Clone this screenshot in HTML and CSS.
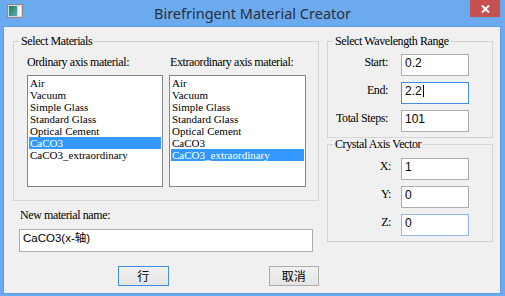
FILE: index.html
```html
<!DOCTYPE HTML>
<html>
<head>
  <meta http-equiv="content-type" content="text/html; charset=utf-8">
  <title>Birefringent Material Creator</title>
  <link rel="stylesheet" href="styles.css">
</head>
<body>
  <div class="window">
    <div class="titlebar">
      <svg class="app-icon" width="16" height="14" viewBox="0 0 16 14">
        <defs>
          <linearGradient id="pane" x1="0" y1="0" x2="1" y2="1">
            <stop offset="0" stop-color="#1f7a5c"/>
            <stop offset="0.5" stop-color="#3c9a7e"/>
            <stop offset="1" stop-color="#5aa8d0"/>
          </linearGradient>
        </defs>
        <rect x="0.5" y="0.5" width="15" height="13" fill="#d8d8d8" stroke="#8a8a8a"/>
        <rect x="2" y="2" width="8" height="10" fill="url(#pane)"/>
        <rect x="11" y="2" width="3" height="10" fill="#f8f8f8"/>
      </svg>
      <div class="title">Birefringent Material Creator</div>
      <div class="close">
        <svg width="9" height="8" viewBox="0 0 9 8">
          <path d="M1 0.5 L8 7.5 M8 0.5 L1 7.5" stroke="#fff" stroke-width="2"/>
        </svg>
      </div>
    </div>

    <div class="client">
      <div class="left">
        <fieldset class="group materials">
          <legend>Select Materials</legend>
          <div class="lists">
            <div class="list-col">
              <div class="caption">Ordinary axis material:</div>
              <ul class="listbox">
                <li>Air</li>
                <li>Vacuum</li>
                <li>Simple Glass</li>
                <li>Standard Glass</li>
                <li>Optical Cement</li>
                <li class="selected">CaCO3</li>
                <li>CaCO3_extraordinary</li>
              </ul>
            </div>
            <div class="list-col">
              <div class="caption">Extraordinary axis material:</div>
              <ul class="listbox">
                <li>Air</li>
                <li>Vacuum</li>
                <li>Simple Glass</li>
                <li>Standard Glass</li>
                <li>Optical Cement</li>
                <li>CaCO3</li>
                <li class="selected">CaCO3_extraordinary</li>
              </ul>
            </div>
          </div>
        </fieldset>

        <div class="caption name-caption">New material name:</div>
        <div class="textbox name-box">CaCO3(x-轴)</div>

        <div class="buttons">
          <div class="btn default">行</div>
          <div class="btn">取消</div>
        </div>
      </div>

      <div class="right">
        <fieldset class="group range">
          <legend>Select Wavelength Range</legend>
          <div class="fields">
            <div class="field-label">Start:</div>
            <div class="textbox">0.2</div>
            <div class="field-label">End:</div>
            <div class="textbox focused">2.2<span class="caret"></span></div>
            <div class="field-label">Total Steps:</div>
            <div class="textbox">101</div>
          </div>
        </fieldset>

        <fieldset class="group axis">
          <legend>Crystal Axis Vector</legend>
          <div class="fields">
            <div class="field-label">X:</div>
            <div class="textbox">1</div>
            <div class="field-label">Y:</div>
            <div class="textbox">0</div>
            <div class="field-label">Z:</div>
            <div class="textbox hover">0</div>
          </div>
        </fieldset>
      </div>
    </div>
  </div>
</body>
</html>
```

FILE: styles.css
```css
html, body {
  margin: 0;
  padding: 0;
  width: 505px;
  height: 296px;
  overflow: hidden;
  background-color: #6caaf0;
}
.window {
  width: 505px;
  height: 296px;
  background-color: #6caaf0;
  font-family: "Liberation Serif", serif;
  font-size: 12px;
  letter-spacing: -0.4px;
  color: #000;
}
.titlebar {
  position: relative;
  height: 26px;
}
.app-icon {
  position: absolute;
  left: 7px;
  top: 4px;
}
.title {
  padding-top: 3px;
  text-align: center;
  font-family: "Noto Sans", sans-serif;
  font-size: 14.5px;
  letter-spacing: 0;
  line-height: 20px;
  color: #26303c;
}
.close {
  position: absolute;
  right: 5px;
  top: 0;
  width: 30px;
  height: 17px;
  background-color: #c75050;
  display: flex;
  align-items: center;
  justify-content: center;
}

.client {
  margin-left: 3px;
  border: 1px solid #5e9de4;
  background-color: #f0f0f0;
  display: flex;
  padding: 8px 0 0 9px;
  height: 258px;
  width: 487px;
}
.left {
  width: 306px;
}
.right {
  width: 166px;
  margin-left: 8px;
}

fieldset.group {
  margin: 0;
  padding: 0;
  min-inline-size: 0;
  border: 1px solid #d5d5d5;
}
fieldset.group legend {
  margin-left: 5px;
  padding: 0 2px;
  line-height: 12px;
}

.caption {
  line-height: 12px;
  white-space: nowrap;
}
.lists {
  display: flex;
  gap: 6px;
  padding: 9px 12px 13px 13px;
}
.list-col:first-child {
  width: 136px;
}
.list-col:last-child {
  width: 137px;
}
.list-col:last-child .caption {
  padding-left: 1px;
}
.listbox {
  list-style: none;
  margin: 7px 0 0 0;
  padding: 1px;
  height: 112px;
  box-sizing: border-box;
  border: 1px solid #828790;
  background-color: #fff;
}
.listbox li {
  font-size: 11px;
  letter-spacing: 0;
  line-height: 12px;
  height: 12px;
  padding-left: 1px;
  white-space: nowrap;
}
.listbox li.selected {
  background-color: #3399ff;
  color: #fff;
}

.textbox {
  height: 22px;
  box-sizing: border-box;
  border: 1px solid #abadb3;
  background-color: #fff;
  padding: 0 3px;
  font-family: "Liberation Sans", "Noto Sans CJK SC", sans-serif;
  font-size: 12px;
  letter-spacing: 0;
  line-height: 16px;
  white-space: nowrap;
}
.textbox.focused {
  border-color: #3d8ee6;
}
.textbox.hover {
  border-color: #8fb8e6;
}
.caret {
  display: inline-block;
  width: 1px;
  height: 12px;
  background-color: #000;
  vertical-align: -2px;
  margin-left: 1px;
}

.name-caption {
  margin: 8px 0 0 7px;
}
.name-box {
  margin: 8px 0 0 6px;
  width: 294px;
  height: 23px;
  font-size: 11.5px;
}

.buttons {
  display: flex;
  gap: 100px;
  margin-top: 14px;
  padding-left: 105px;
}
.btn {
  width: 65px;
  height: 20px;
  box-sizing: border-box;
  border: 1px solid #acacac;
  background: linear-gradient(#f0f0f0, #e5e5e5);
  text-align: center;
  font-family: "Noto Sans CJK SC", sans-serif;
  font-size: 12px;
  letter-spacing: 0;
  line-height: 18px;
}
.btn.default {
  border-color: #3c8ee8;
}

.fields {
  display: grid;
  grid-template-columns: 63px 68px;
  column-gap: 10px;
  row-gap: 6px;
  padding: 7px 0 5px 0;
}
.field-label {
  text-align: right;
  padding-right: 3px;
  margin-top: 2px;
  line-height: 12px;
  white-space: nowrap;
}
.axis {
  margin-top: 8px;
}
.axis .fields {
  padding-top: 8px;
}
.axis .field-label {
  padding-right: 0;
}
```
